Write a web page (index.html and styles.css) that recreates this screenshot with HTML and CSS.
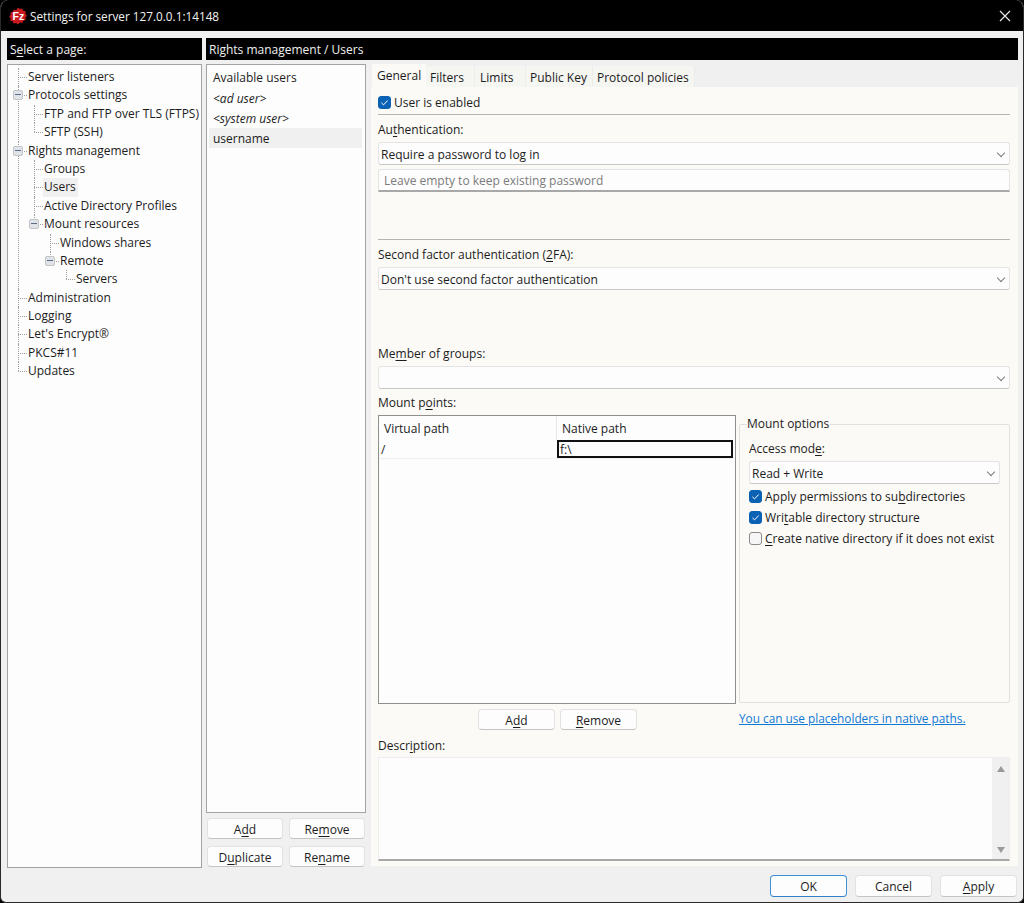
FILE: index.html
```html
<!DOCTYPE html>
<html lang="en">

<head>
    <meta charset="UTF-8">
    <title>Settings for server 127.0.0.1:14148</title>
    <link rel="stylesheet" href="styles.css">
</head>

<body>
    <div class="window">
        <div class="titlebar">
            <svg class="logo" width="18" height="18" viewBox="0 0 18 18">
                <path d="M9 0.5l1.9 1.6 2.4-.7 1 2.3 2.4.6-.3 2.5 1.6 1.9-1.6 1.9.3 2.5-2.4.6-1 2.3-2.4-.7L9 17.5l-1.9-1.6-2.4.7-1-2.3-2.4-.6.3-2.5L.1 9.8 1.7 7.9l-.3-2.5 2.4-.6 1-2.3 2.4.7z" fill="#c8191e"/>
                <text x="3.6" y="13" class="logo-text">Fz</text>
            </svg>
            <span class="title">Settings for server 127.0.0.1:14148</span>
            <svg class="close-x" width="12" height="12" viewBox="0 0 12 12">
                <path d="M1 1l10 10M11 1L1 11" stroke="#e6e6e6" stroke-width="1.2" fill="none"/>
            </svg>
        </div>

        <div class="content">
            <div class="left-col">
                <div class="heading">S<u>e</u>lect a page:</div>
                <div class="tree-box">
                    <ul class="tree root">
                        <li><span class="node">Server listeners</span></li>
                        <li class="open"><i class="expander"></i><span class="node">Protocols settings</span>
                            <ul class="tree">
                                <li><span class="node">FTP and FTP over TLS (FTPS)</span></li>
                                <li><span class="node">SFTP (SSH)</span></li>
                            </ul>
                        </li>
                        <li class="open"><i class="expander"></i><span class="node">Rights management</span>
                            <ul class="tree">
                                <li><span class="node">Groups</span></li>
                                <li><span class="node selected">Users</span></li>
                                <li><span class="node">Active Directory Profiles</span></li>
                                <li class="open"><i class="expander"></i><span class="node">Mount resources</span>
                                    <ul class="tree">
                                        <li><span class="node">Windows shares</span></li>
                                        <li class="open"><i class="expander"></i><span class="node">Remote</span>
                                            <ul class="tree">
                                                <li><span class="node">Servers</span></li>
                                            </ul>
                                        </li>
                                    </ul>
                                </li>
                            </ul>
                        </li>
                        <li><span class="node">Administration</span></li>
                        <li><span class="node">Logging</span></li>
                        <li><span class="node">Let's Encrypt®</span></li>
                        <li><span class="node">PKCS#11</span></li>
                        <li><span class="node">Updates</span></li>
                    </ul>
                </div>
            </div>

            <div class="right-col">
                <div class="heading">Rights management / Users</div>
                <div class="page">
                    <div class="users-col">
                        <div class="users-list">
                            <div class="users-title">Available users</div>
                            <div class="user-row italic">&lt;ad user&gt;</div>
                            <div class="user-row italic">&lt;system user&gt;</div>
                            <div class="user-row active">username</div>
                        </div>
                        <div class="users-buttons">
                            <button class="btn">A<u>d</u>d</button>
                            <button class="btn">Re<u>m</u>ove</button>
                            <button class="btn">D<u>u</u>plicate</button>
                            <button class="btn">Re<u>n</u>ame</button>
                        </div>
                    </div>

                    <div class="tabs-col">
                        <div class="tabs">
                            <div class="tab current">General</div>
                            <div class="tab tab-filters">Filters</div>
                            <div class="tab tab-limits">Limits</div>
                            <div class="tab tab-key">Public Key</div>
                            <div class="tab tab-policies">Protocol policies</div>
                        </div>
                        <div class="tab-body">
                            <label class="check enabled"><i class="box on"></i>User is enabled</label>
                            <hr class="sep">
                            <div class="label auth-label">Au<u>t</u>hentication:</div>
                            <div class="select">Require a password to log in</div>
                            <div class="input">Leave empty to keep existing password</div>
                            <hr class="sep sep-2fa">
                            <div class="label twofa-label">Second factor authentication (<u>2</u>FA):</div>
                            <div class="select">Don't use second factor authentication</div>
                            <div class="label member-label">Me<u>m</u>ber of groups:</div>
                            <div class="select"></div>
                            <div class="label mount-label">Mount p<u>o</u>ints:</div>

                            <div class="mounts">
                                <div class="mounts-left">
                                    <div class="table">
                                        <div class="table-head">
                                            <div class="col-virtual">Virtual path</div>
                                            <div class="col-native">Native path</div>
                                        </div>
                                        <div class="table-row">
                                            <div class="cell-virtual">/</div>
                                            <div class="cell-native">f:\</div>
                                        </div>
                                    </div>
                                    <div class="mount-buttons">
                                        <button class="btn">A<u>d</u>d</button>
                                        <button class="btn"><u>R</u>emove</button>
                                    </div>
                                </div>
                                <div class="mounts-right">
                                    <fieldset class="options">
                                        <legend>Mount options</legend>
                                        <div class="label">Access mod<u>e</u>:</div>
                                        <div class="select">Read + Write</div>
                                        <label class="check"><i class="box on"></i><span>Apply permissions to su<u>b</u>directories</span></label>
                                        <label class="check"><i class="box on"></i><span>Wri<u>t</u>able directory structure</span></label>
                                        <label class="check"><i class="box"></i><span><u>C</u>reate native directory if it does not exist</span></label>
                                    </fieldset>
                                    <a class="link" href="#">You can use placeholders in native paths.</a>
                                </div>
                            </div>

                            <div class="label desc-label">Descr<u>i</u>ption:</div>
                            <div class="textarea">
                                <div class="scrollbar">
                                    <i class="arrow up"></i>
                                    <i class="arrow down"></i>
                                </div>
                            </div>
                        </div>
                    </div>
                </div>
            </div>
        </div>

        <div class="footer">
            <button class="btn default">OK</button>
            <button class="btn">Cancel</button>
            <button class="btn"><u>A</u>pply</button>
        </div>
    </div>
</body>

</html>
```

FILE: styles.css
```css
* {
    box-sizing: border-box;
}

html,
body {
    margin: 0;
    height: 100%;
}

body {
    font-family: "Open Sans", "Noto Sans", sans-serif;
    font-size: 12px;
    color: #1c1c1c;
    background: #000;
}

u {
    text-underline-offset: 2px;
}

.window {
    height: 903px;
    display: flex;
    flex-direction: column;
    background: #f0f0f0;
    border: 1px solid #2a2a2a;
    border-top: 0;
    border-radius: 8px 8px 6px 6px;
    overflow: hidden;
}

/* Title bar */
.titlebar {
    height: 31px;
    flex: none;
    display: flex;
    align-items: center;
    background: #000;
    color: #f2f2f2;
    padding: 0 12px 0 8px;
}

.logo {
    flex: none;
}

.logo-text {
    font-family: "Liberation Sans", sans-serif;
    font-size: 10.5px;
    font-weight: bold;
    fill: #fff;
}

.title {
    margin-left: 3px;
    flex: 1;
    font-size: 11.75px;
}

/* Main area */
.content {
    flex: 1;
    display: flex;
    gap: 4px;
    padding: 7px 5px 0 6px;
}

.left-col {
    width: 195px;
    display: flex;
    flex-direction: column;
}

.right-col {
    width: 812px;
    display: flex;
    flex-direction: column;
}

.heading {
    height: 22px;
    line-height: 23px;
    background: #000;
    color: #f0f0f0;
    padding-left: 3px;
}

.tree-box {
    margin-top: 4px;
    height: 804px;
    background: #fdfdfd;
    border: 1px solid #a3a3a3;
    padding-top: 3px;
}

/* Tree */
.tree {
    list-style: none;
    margin: 0;
    padding: 0 0 0 16px;
}

.tree.root {
    padding-left: 10px;
}

.tree li {
    position: relative;
}

.tree li::before {
    content: "";
    position: absolute;
    left: 0;
    top: 0;
    bottom: 0;
    border-left: 1px dotted #a0a0a0;
}

.tree li:last-child::before {
    bottom: auto;
    height: 9px;
}

.tree li::after {
    content: "";
    position: absolute;
    left: 0;
    top: 9px;
    width: 9px;
    border-top: 1px dotted #a0a0a0;
}

.node {
    display: block;
    width: max-content;
    height: 18.4px;
    line-height: 18px;
    margin-left: 9px;
    padding: 0 1px;
    white-space: nowrap;
}

.node.selected {
    background: #f0f0f0;
    padding-right: 2px;
}

.expander {
    position: absolute;
    z-index: 1;
    left: -5px;
    top: 4px;
    width: 10px;
    height: 10px;
    background: #dfe3ea;
    border: 1px solid #c4c4c4;
    border-radius: 2px;
}

.expander::after {
    content: "";
    position: absolute;
    left: 1px;
    top: 3px;
    width: 6px;
    height: 1px;
    background: #5d6b84;
}

/* Users column */
.page {
    flex: 1;
    display: flex;
    gap: 5px;
    margin-top: 4px;
}

.users-col {
    width: 160px;
    flex: none;
}

.users-list {
    height: 749px;
    background: #fdfdfd;
    border: 1px solid #a3a3a3;
    padding: 2px 2px 0;
}

.users-title {
    height: 21px;
    line-height: 21px;
    padding-left: 4px;
}

.user-row {
    height: 20px;
    line-height: 21px;
    padding-left: 4px;
    margin-right: 1px;
}

.italic {
    font-style: italic;
}

.user-row.active {
    background: #f0f0f0;
}

.users-buttons {
    display: grid;
    grid-template-columns: 76px 76px;
    column-gap: 6px;
    row-gap: 7px;
    grid-auto-rows: 21px;
    margin: 5px 0 0 1px;
}

/* Buttons */
.btn {
    font: inherit;
    color: inherit;
    height: 21px;
    padding: 1px 0 0;
    background: #fdfdfd;
    border: 1px solid #e2e2e2;
    border-bottom-color: #c4c4c4;
    border-radius: 4px;
}

.btn.default {
    border: 1px solid #3f8fd6;
    border-bottom-color: #2f7fc8;
}

/* Tabs */
.tabs-col {
    width: 647px;
    flex: none;
    display: flex;
    flex-direction: column;
    height: 802px;
}

.tabs {
    display: flex;
    height: 23px;
    flex: none;
    padding-left: 1px;
}

.tab {
    height: 21px;
    line-height: 23px;
    margin-top: 2px;
    padding-left: 4px;
    background: #f5f5f2;
}

.tab.current {
    width: 54px;
    height: 23px;
    margin-top: 0;
    line-height: 24px;
    padding-left: 5px;
    background: #fbfaf6;
}

.tab-filters {
    width: 49px;
}

.tab-limits {
    width: 51px;
    padding-left: 5px;
}

.tab-key {
    width: 67px;
    padding-left: 4px;
}

.tab-policies {
    width: 102px;
}

.tab + .tab {
    border-right: 1px solid #ececec;
}

.tab-body {
    flex: 1;
    background: #fbfaf6;
    padding: 0 8px 0 7px;
}

.label {
    height: 18px;
    line-height: 19px;
}

.check {
    display: flex;
    align-items: center;
    height: 21px;
    white-space: nowrap;
}

.enabled {
    margin-top: 5px;
    height: 20px;
}

.box {
    flex: none;
    width: 13px;
    height: 13px;
    margin-right: 3px;
    background: #f6f6f6;
    border: 1px solid #8a8a8a;
    border-radius: 3px;
}

.box.on {
    background: #0b62b5 url("data:image/svg+xml;utf8,<svg xmlns='http://www.w3.org/2000/svg' width='11' height='11'><path d='M2.4 5.8l2.1 2.1 4.2-4.4' stroke='white' stroke-width='1' fill='none'/></svg>") center no-repeat;
    border-color: #0b62b5;
}

.sep {
    height: 0;
    margin: 2px 0 0;
    border: 0;
    border-top: 1px solid #b5b5b5;
}

.auth-label {
    margin-top: 5px;
}

.sep-2fa {
    margin-top: 47px;
}

.twofa-label {
    margin-top: 5px;
}

.member-label {
    margin-top: 54px;
}

.mount-label {
    margin-top: 4px;
}

/* Fields */
.select,
.input {
    position: relative;
    height: 23px;
    line-height: 23px;
    margin-top: 4px;
    padding-left: 2px;
    background: #fdfdfd;
    border: 1px solid #e4e4e4;
    border-bottom-color: #c8c8c8;
    border-radius: 3px;
}

.select::after {
    content: "";
    position: absolute;
    right: 5px;
    top: 7px;
    width: 5px;
    height: 5px;
    border-right: 1px solid #7a7a7a;
    border-bottom: 1px solid #7a7a7a;
    transform: rotate(45deg);
}

.input {
    margin-top: 4px;
    line-height: 22px;
    padding-left: 5px;
    color: #7c7c7c;
    border-bottom: 2px solid #a8a8a8;
    border-radius: 3px 3px 0 0;
}

/* Mount points */
.mounts {
    display: flex;
    margin-top: 4px;
    gap: 3px;
}

.mounts-left {
    width: 358px;
    flex: none;
}

.mounts-right {
    width: 271px;
    flex: none;
}

.table {
    height: 289px;
    background: #fdfdfd;
    border: 1px solid #8f8f8f;
}

.table-head {
    display: flex;
    height: 24px;
    line-height: 25px;
}

.col-virtual {
    width: 178px;
    padding-left: 5px;
    border-right: 1px solid #e6e6e6;
}

.col-native {
    padding-left: 5px;
}

.table-row {
    display: flex;
    height: 19px;
    border-bottom: 1px solid #f0f0f0;
}

.cell-virtual {
    width: 178px;
    padding-left: 2px;
    line-height: 19px;
}

.cell-native {
    width: 176px;
    padding-left: 1px;
    line-height: 15px;
    border: 2px solid #111;
}

.mount-buttons {
    display: flex;
    justify-content: center;
    gap: 5px;
    margin-top: 5px;
    padding-left: 1px;
}

.mount-buttons .btn {
    width: 77px;
}

.options {
    margin: 0;
    min-width: 0;
    height: 288px;
    padding: 0 9px;
    border: 1px solid #e0e0e0;
    border-radius: 2px;
}

.options legend {
    padding: 0 1px 0 0;
    margin-left: -2px;
    line-height: 18px;
}

.options .label {
    margin-top: 6px;
}

.options .select {
    margin-bottom: 2px;
}

.link {
    display: block;
    margin-top: 6px;
    line-height: 18px;
    font-size: 11.8px;
    color: #0f78d4;
}

/* Description */
.desc-label {
    margin-top: 6px;
}

.textarea {
    display: flex;
    justify-content: flex-end;
    height: 104px;
    margin-top: 3px;
    background: #fdfdfd;
    border: 1px solid #eeeeee;
    border-bottom: 2px solid #a8a8a8;
}

.scrollbar {
    width: 17px;
    display: flex;
    flex-direction: column;
    justify-content: space-between;
    align-items: center;
    padding: 8px 0 6px;
    background: #f0f0f0;
}

.arrow {
    width: 0;
    height: 0;
    border-left: 4px solid transparent;
    border-right: 4px solid transparent;
}

.arrow.up {
    border-bottom: 6px solid #9a9a9a;
}

.arrow.down {
    border-top: 6px solid #9a9a9a;
}

/* Bottom buttons */
.footer {
    height: 35px;
    flex: none;
    display: flex;
    justify-content: flex-end;
    gap: 8px;
    padding: 7px 6px 0 0;
}

.footer .btn {
    width: 77px;
    height: 22px;
    padding-top: 0;
}
```
